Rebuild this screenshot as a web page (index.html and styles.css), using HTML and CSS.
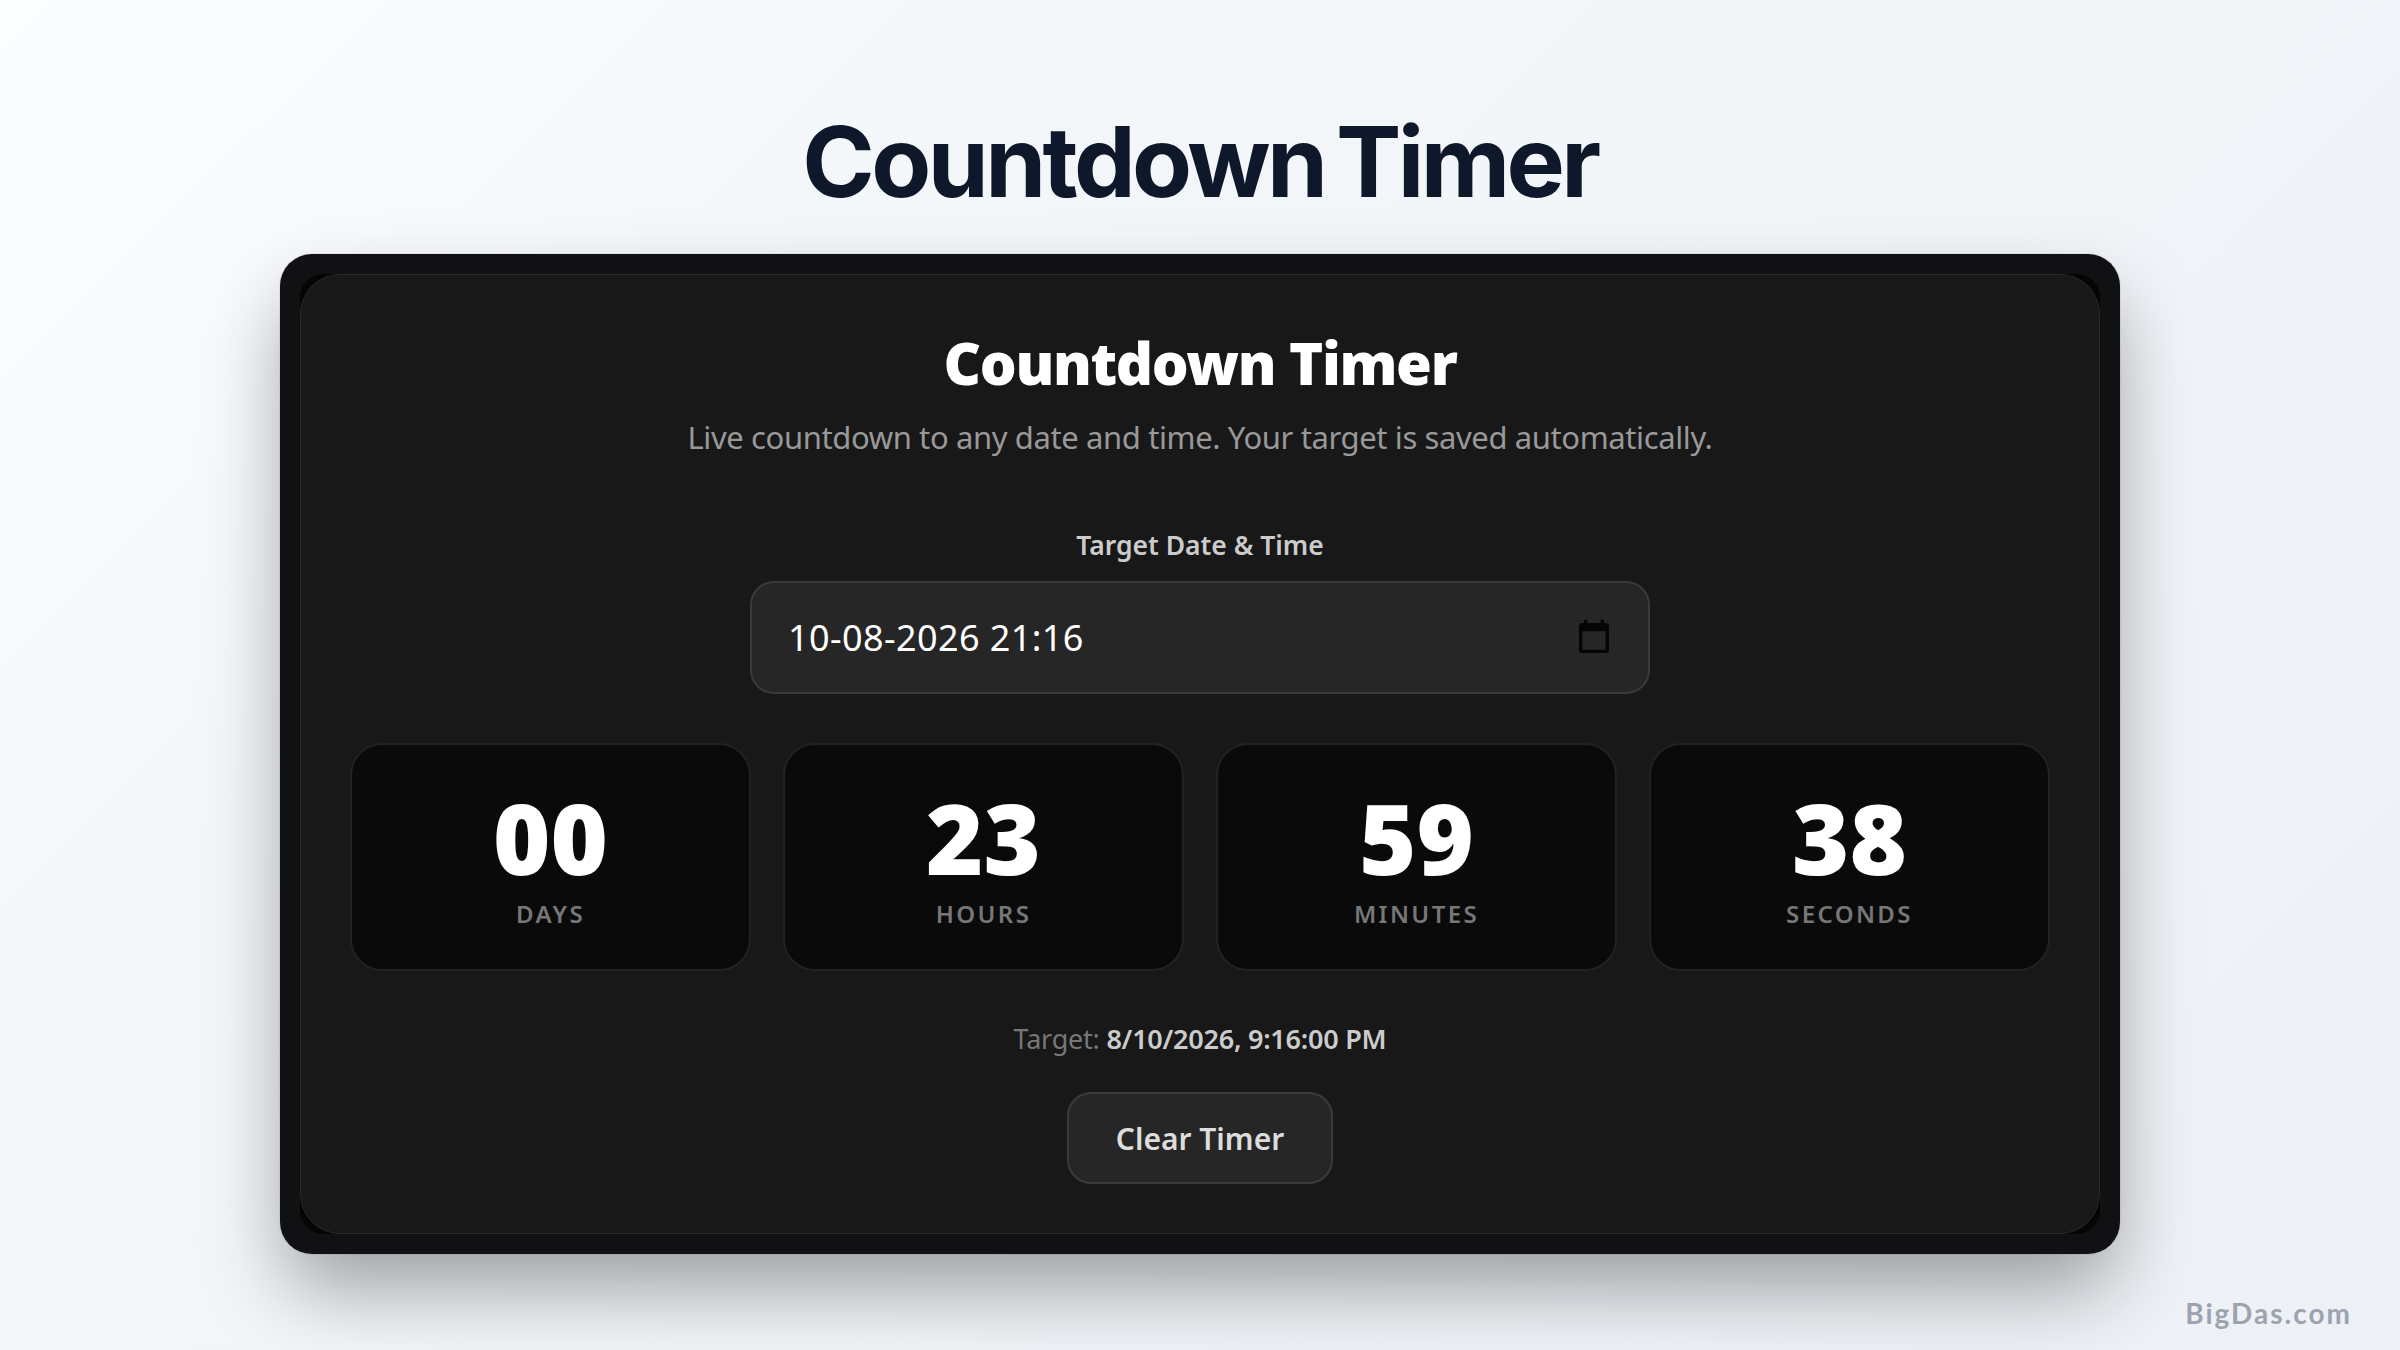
FILE: index.html
```html
<!DOCTYPE html>
<html lang="en">
<head>
<meta charset="utf-8">
<title>Countdown Timer</title>
<link rel="stylesheet" href="styles.css">
</head>
<body>
<main class="page">
  <h1 class="page-title">Countdown Timer</h1>
  <div class="frame">
    <div class="screen">
      <section class="card">
        <h2 class="card-title">Countdown Timer</h2>
        <p class="subtitle">Live countdown to any date and time. Your target is saved automatically.</p>
        <div class="field">
          <div class="field-label">Target Date &amp; Time</div>
          <div class="date-input">
            <span class="date-value">10-08-2026 21:16</span>
            <svg class="cal-icon" viewBox="0 0 24 24" aria-hidden="true"><path d="M19 3h-1V1h-2v2H8V1H6v2H5a2 2 0 0 0-2 2v14a2 2 0 0 0 2 2h14a2 2 0 0 0 2-2V5a2 2 0 0 0-2-2zm0 16H5V8h14v11z"/></svg>
          </div>
        </div>
        <div class="tiles">
          <div class="tile"><div class="tile-num">00</div><div class="tile-label">DAYS</div></div>
          <div class="tile"><div class="tile-num">23</div><div class="tile-label">HOURS</div></div>
          <div class="tile"><div class="tile-num">59</div><div class="tile-label">MINUTES</div></div>
          <div class="tile"><div class="tile-num">38</div><div class="tile-label">SECONDS</div></div>
        </div>
        <p class="target">Target: <strong class="target-date">8/10/2026, 9:16:00 PM</strong></p>
        <button class="clear-btn" type="button">Clear Timer</button>
      </section>
    </div>
  </div>
</main>
<div class="watermark">BigDas.com</div>
</body>
</html>
```
FILE: styles.css
```css
* { box-sizing: border-box; }
html, body { margin: 0; height: 100%; }
body {
  background: linear-gradient(135deg, #fcfdfe 0%, #f4f7fa 28%, #edf1f6 100%);
  font-family: "Noto Sans", "Open Sans", sans-serif;
  overflow: hidden;
}
.page {
  height: 1350px;
  display: flex;
  flex-direction: column;
  align-items: center;
  padding-top: 102px;
}
.page-title {
  margin: 0 0 32px;
  font-family: "Inter", sans-serif;
  font-size: 98px;
  line-height: 120px;
  font-weight: 700;
  letter-spacing: -3.6px;
  word-spacing: -8px;
  color: #0f172a;
}
.frame {
  width: 1840px;
  height: 1000px;
  padding: 20px;
  background: #111114;
  border-radius: 32px;
  box-shadow: 0 0 0 1px rgba(0,0,0,.05), 0 40px 80px -6px rgba(0,0,0,.36);
}
.screen {
  height: 100%;
  background: #050505;
  border-radius: 24px;
}
.card {
  height: 100%;
  padding: 52px 49px 0;
  background: #181818;
  border: 1px solid #2a2a2a;
  border-radius: 40px;
  display: flex;
  flex-direction: column;
  align-items: center;
}
.card-title {
  margin: 0;
  font-size: 58px;
  line-height: 72px;
  font-weight: 900;
  letter-spacing: -1.33px;
  color: #fff;
}
.subtitle {
  margin: 16px 0 0;
  font-size: 31px;
  line-height: 44px;
  letter-spacing: -0.39px;
  color: #999;
}
.field {
  margin-top: 67px;
  display: flex;
  flex-direction: column;
  align-items: center;
}
.field-label {
  font-size: 26.5px;
  line-height: 38px;
  font-weight: 600;
  color: #ccc;
}
.date-input {
  margin-top: 17px;
  width: 900px;
  height: 113px;
  padding: 0 34px 0 36px;
  display: flex;
  align-items: center;
  justify-content: space-between;
  background: #262626;
  border: 2px solid #3a3a3a;
  border-radius: 24px;
}
.date-value {
  font-size: 36px;
  letter-spacing: 0.4px;
  color: #fff;
}
.cal-icon {
  width: 40px;
  height: 40px;
  fill: #050505;
}
.tiles {
  margin-top: 49px;
  width: 100%;
  display: grid;
  grid-template-columns: repeat(4, 1fr);
  gap: 32px;
}
.tile {
  height: 228px;
  background: #0a0a0a;
  border: 2px solid #222;
  border-radius: 32px;
  display: flex;
  flex-direction: column;
  align-items: center;
  padding-top: 33px;
}
.tile-num {
  font-size: 98px;
  line-height: 118px;
  font-weight: 900;
  color: #fff;
}
.tile-label {
  margin-top: 2px;
  font-size: 24px;
  line-height: 32px;
  font-weight: 600;
  letter-spacing: 2.4px;
  color: #777;
}
.target {
  margin: 49px 0 0;
  font-size: 27px;
  line-height: 38px;
  letter-spacing: -0.24px;
  color: #777;
}
.target-date {
  font-weight: 600;
  color: #ccc;
}
.clear-btn {
  margin-top: 34px;
  width: 266px;
  height: 92px;
  background: #262626;
  border: 2px solid #3a3a3a;
  border-radius: 24px;
  font-family: inherit;
  font-size: 30px;
  font-weight: 600;
  color: #ddd;
}
.watermark {
  position: absolute;
  right: 48px;
  bottom: 20px;
  font-family: "Lato", sans-serif;
  font-size: 28px;
  line-height: 34px;
  font-weight: 700;
  letter-spacing: 2px;
  color: #9ca3af;
}
```
